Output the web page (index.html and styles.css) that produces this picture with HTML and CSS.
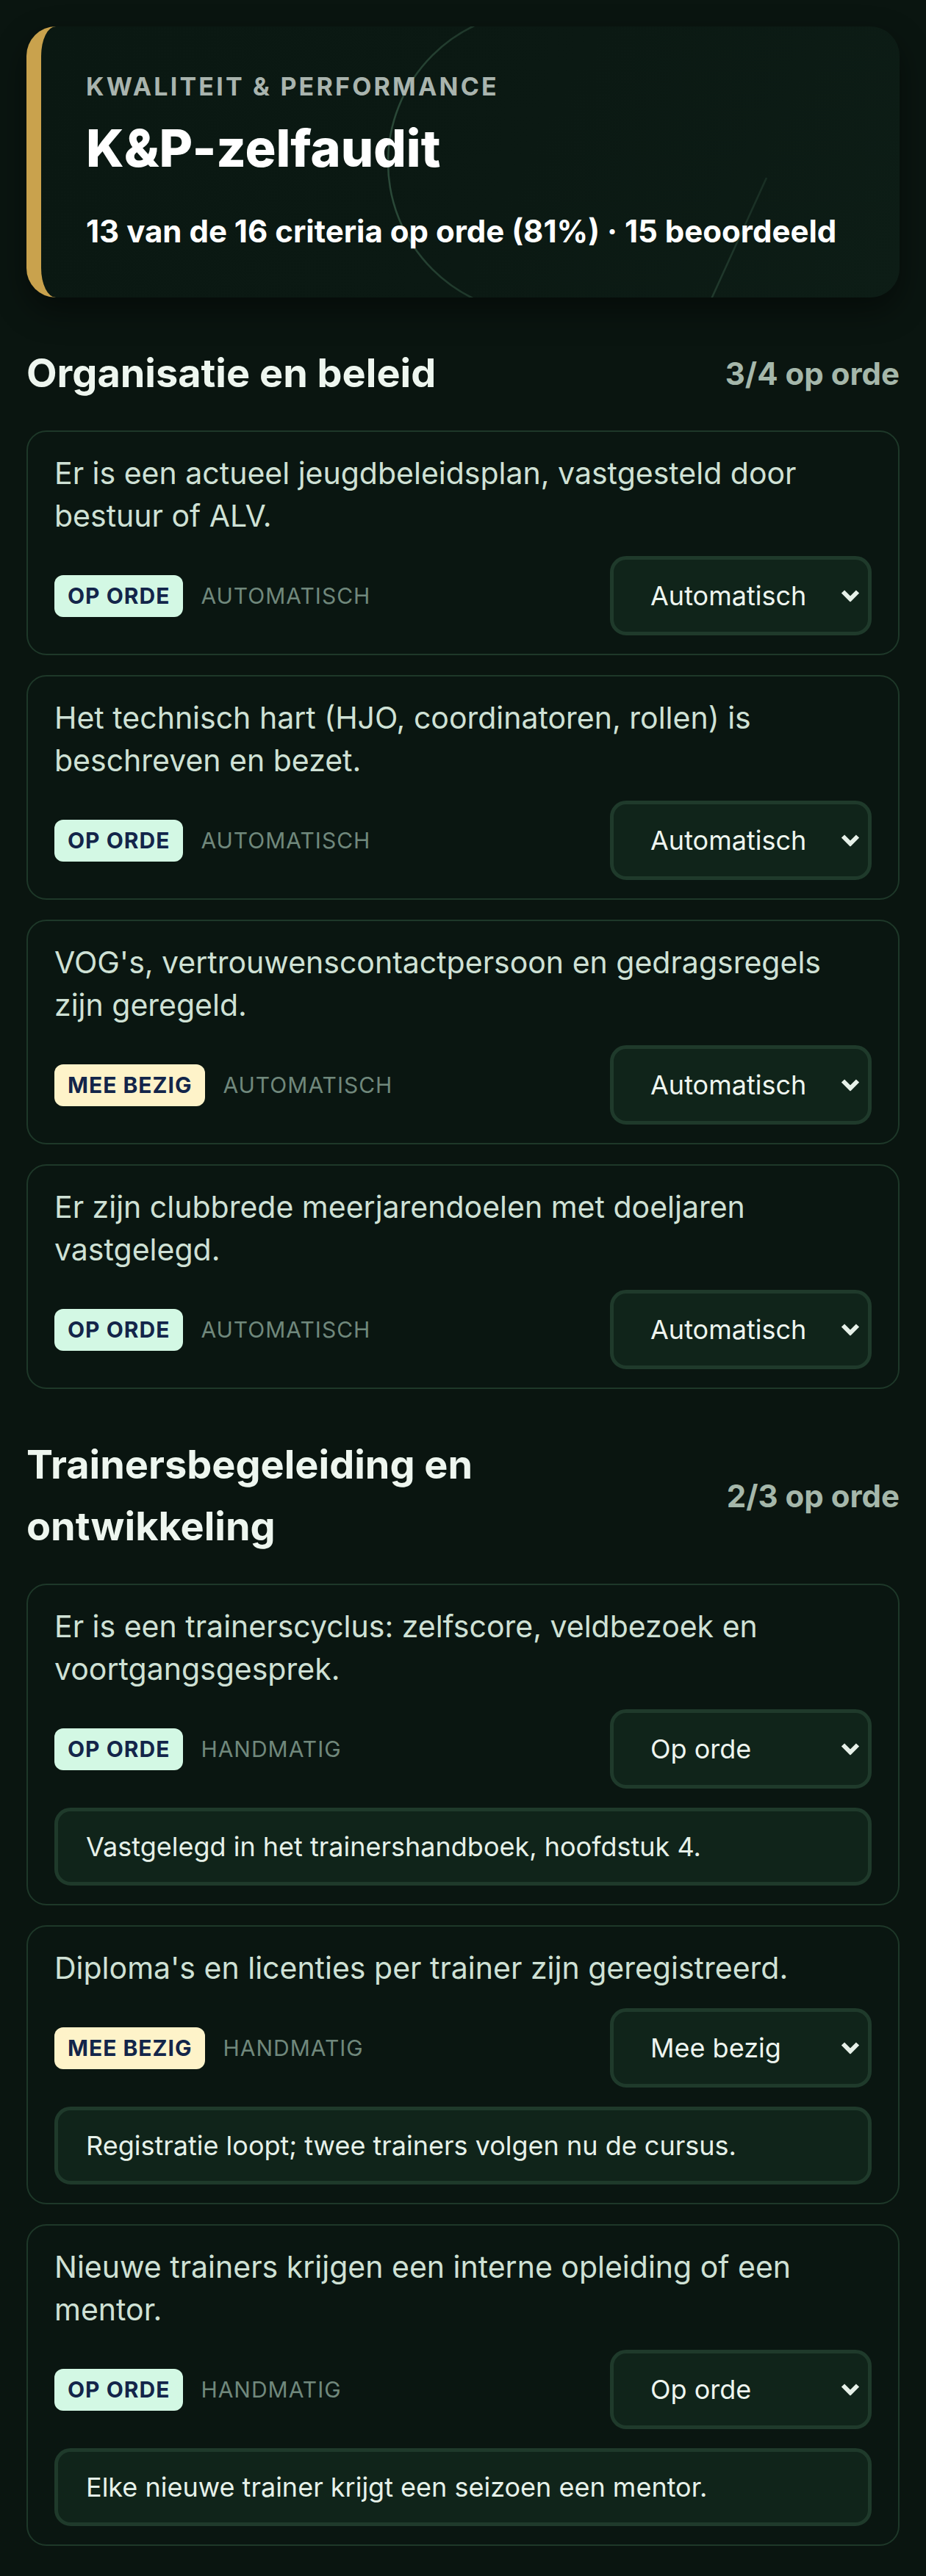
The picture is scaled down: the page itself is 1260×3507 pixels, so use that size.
FILE: index.html
```html
<!DOCTYPE html>
<html lang="nl">
  <head>
    <meta charset="UTF-8" />
    <meta name="viewport" content="width=device-width, initial-scale=1.0" />
    <title>K&amp;P-zelfaudit</title>
    <link rel="stylesheet" href="styles.css">
  </head>
  <body>
    <header class="hero">
      <svg class="hero-deco" width="1168" height="371" viewBox="0 0 1168 371" aria-hidden="true">
        <defs>
          <linearGradient id="ringFade" gradientUnits="userSpaceOnUse" x1="470" y1="0" x2="760" y2="0">
            <stop offset="0" stop-color="#2b4a39" stop-opacity="1" />
            <stop offset="1" stop-color="#2b4a39" stop-opacity="0" />
          </linearGradient>
          <linearGradient id="lineFade" gradientUnits="userSpaceOnUse" x1="0" y1="200" x2="0" y2="371">
            <stop offset="0" stop-color="#213a2d" stop-opacity="0.6" />
            <stop offset="1" stop-color="#213a2d" stop-opacity="1" />
          </linearGradient>
        </defs>
        <circle cx="678" cy="185" r="206" fill="none" stroke="url(#ringFade)" stroke-width="2.5" />
        <line x1="987" y1="206" x2="906" y2="384" stroke="url(#lineFade)" stroke-width="2.5" />
      </svg>
      <p class="hero-label">Kwaliteit &amp; Performance</p>
      <h1 class="hero-title">K&amp;P-zelfaudit</h1>
      <p class="hero-summary">13 van de 16 criteria op orde (81%) · 15 beoordeeld</p>
    </header>

    <section class="group">
      <div class="group-head">
        <h2>Organisatie en beleid</h2>
        <span class="group-count">3/4 op orde</span>
      </div>
      <div class="cards">
        <div class="card">
          <p class="criterion">Er is een actueel jeugdbeleidsplan, vastgesteld door bestuur of ALV.</p>
          <div class="card-row">
            <div class="status">
              <span class="badge ok">Op orde</span>
              <span class="source">Automatisch</span>
            </div>
            <div class="select-wrap">
              <select>
                <option selected>Automatisch</option>
                <option>Op orde</option>
                <option>Mee bezig</option>
                <option>Niet op orde</option>
              </select>
              <svg class="chevron" width="26" height="17" viewBox="0 0 26 17"><path d="M3 3 L13 13 L23 3" /></svg>
            </div>
          </div>
        </div>

        <div class="card">
          <p class="criterion">Het technisch hart (HJO, coordinatoren, rollen) is beschreven en bezet.</p>
          <div class="card-row">
            <div class="status">
              <span class="badge ok">Op orde</span>
              <span class="source">Automatisch</span>
            </div>
            <div class="select-wrap">
              <select>
                <option selected>Automatisch</option>
                <option>Op orde</option>
                <option>Mee bezig</option>
                <option>Niet op orde</option>
              </select>
              <svg class="chevron" width="26" height="17" viewBox="0 0 26 17"><path d="M3 3 L13 13 L23 3" /></svg>
            </div>
          </div>
        </div>

        <div class="card">
          <p class="criterion">VOG's, vertrouwenscontactpersoon en gedragsregels zijn geregeld.</p>
          <div class="card-row">
            <div class="status">
              <span class="badge busy">Mee bezig</span>
              <span class="source">Automatisch</span>
            </div>
            <div class="select-wrap">
              <select>
                <option selected>Automatisch</option>
                <option>Op orde</option>
                <option>Mee bezig</option>
                <option>Niet op orde</option>
              </select>
              <svg class="chevron" width="26" height="17" viewBox="0 0 26 17"><path d="M3 3 L13 13 L23 3" /></svg>
            </div>
          </div>
        </div>

        <div class="card">
          <p class="criterion">Er zijn clubbrede meerjarendoelen met doeljaren vastgelegd.</p>
          <div class="card-row">
            <div class="status">
              <span class="badge ok">Op orde</span>
              <span class="source">Automatisch</span>
            </div>
            <div class="select-wrap">
              <select>
                <option selected>Automatisch</option>
                <option>Op orde</option>
                <option>Mee bezig</option>
                <option>Niet op orde</option>
              </select>
              <svg class="chevron" width="26" height="17" viewBox="0 0 26 17"><path d="M3 3 L13 13 L23 3" /></svg>
            </div>
          </div>
        </div>
      </div>
    </section>

    <section class="group">
      <div class="group-head">
        <h2>Trainersbegeleiding en ontwikkeling</h2>
        <span class="group-count">2/3 op orde</span>
      </div>
      <div class="cards">
        <div class="card">
          <p class="criterion">Er is een trainerscyclus: zelfscore, veldbezoek en voortgangsgesprek.</p>
          <div class="card-row">
            <div class="status">
              <span class="badge ok">Op orde</span>
              <span class="source">Handmatig</span>
            </div>
            <div class="select-wrap">
              <select>
                <option>Automatisch</option>
                <option selected>Op orde</option>
                <option>Mee bezig</option>
                <option>Niet op orde</option>
              </select>
              <svg class="chevron" width="26" height="17" viewBox="0 0 26 17"><path d="M3 3 L13 13 L23 3" /></svg>
            </div>
          </div>
          <div class="note">Vastgelegd in het trainershandboek, hoofdstuk 4.</div>
        </div>

        <div class="card">
          <p class="criterion">Diploma's en licenties per trainer zijn geregistreerd.</p>
          <div class="card-row">
            <div class="status">
              <span class="badge busy">Mee bezig</span>
              <span class="source">Handmatig</span>
            </div>
            <div class="select-wrap">
              <select>
                <option>Automatisch</option>
                <option>Op orde</option>
                <option selected>Mee bezig</option>
                <option>Niet op orde</option>
              </select>
              <svg class="chevron" width="26" height="17" viewBox="0 0 26 17"><path d="M3 3 L13 13 L23 3" /></svg>
            </div>
          </div>
          <div class="note">Registratie loopt; twee trainers volgen nu de cursus.</div>
        </div>

        <div class="card">
          <p class="criterion">Nieuwe trainers krijgen een interne opleiding of een mentor.</p>
          <div class="card-row">
            <div class="status">
              <span class="badge ok">Op orde</span>
              <span class="source">Handmatig</span>
            </div>
            <div class="select-wrap">
              <select>
                <option>Automatisch</option>
                <option selected>Op orde</option>
                <option>Mee bezig</option>
                <option>Niet op orde</option>
              </select>
              <svg class="chevron" width="26" height="17" viewBox="0 0 26 17"><path d="M3 3 L13 13 L23 3" /></svg>
            </div>
          </div>
          <div class="note">Elke nieuwe trainer krijgt een seizoen een mentor.</div>
        </div>
      </div>
    </section>
  </body>
</html>
```

FILE: styles.css
```css
* {
  box-sizing: border-box;
}
body {
  margin: 0;
  padding: 36px;
  background: #0a1510;
  color: #e9f3ec;
  font-family: Inter, "Noto Sans", "Liberation Sans", sans-serif;
}
p,
h1,
h2 {
  margin: 0;
}

/* kop */
.hero {
  position: relative;
  overflow: hidden;
  padding: 60px 40px 61px 61px;
  border-left: 20px solid #c9a24d;
  border-radius: 40px;
  background: linear-gradient(120deg, #0a1812 0%, #0b1913 55%, #0d1d16 100%);
  box-shadow: 0 18px 44px rgba(0, 0, 0, 0.45);
}
.hero-deco {
  position: absolute;
  top: 0;
  left: 0;
  pointer-events: none;
}
.hero-label,
.hero-title,
.hero-summary {
  position: relative;
}
.hero-label {
  font-size: 34px;
  line-height: 44px;
  font-weight: 700;
  letter-spacing: 3.2px;
  text-transform: uppercase;
  color: #a9b4ae;
}
.hero-title {
  margin-top: 24px;
  font-size: 70px;
  line-height: 76px;
  font-weight: 800;
  color: #ffffff;
}
.hero-summary {
  margin-top: 46px;
  font-size: 42px;
  line-height: 58px;
  font-weight: 700;
  color: #ffffff;
}

/* groepen */
.group {
  margin-top: 61px;
}
.group-head {
  display: flex;
  justify-content: space-between;
  align-items: center;
  gap: 27px;
}
.group-head h2 {
  font-size: 54px;
  line-height: 84px;
  font-weight: 700;
  color: #eef6ef;
}
.group-count {
  flex-shrink: 0;
  font-size: 42px;
  font-weight: 700;
  color: #a5b7aa;
}
.cards {
  display: flex;
  flex-direction: column;
  gap: 27px;
  margin-top: 36px;
}
.card {
  padding: 27px 36px 25px;
  border: 2px solid #1e3829;
  border-radius: 27px;
  background: #0a1611;
}
.criterion {
  font-size: 41px;
  line-height: 58px;
  color: #cfe1d5;
}
.card-row {
  display: flex;
  justify-content: space-between;
  align-items: center;
  margin-top: 26px;
}
.status {
  display: flex;
  align-items: center;
  gap: 24px;
}
.badge {
  display: inline-block;
  padding: 0 18px;
  height: 57px;
  line-height: 57px;
  border-radius: 12px;
  font-size: 30px;
  font-weight: 700;
  letter-spacing: 1px;
  text-transform: uppercase;
  color: #13254a;
}
.badge.ok {
  background: #d3f8e4;
}
.badge.busy {
  background: #fef3c9;
}
.source {
  font-size: 30px;
  letter-spacing: 1px;
  text-transform: uppercase;
  color: #70887c;
}

/* keuzelijst */
.select-wrap {
  position: relative;
}
.select-wrap select {
  appearance: none;
  width: 356px;
  height: 108px;
  padding: 0 60px 0 50px;
  border: 5px solid #1f3a2b;
  border-radius: 22px;
  background: #10241a;
  color: #eef5ef;
  font-family: inherit;
  font-size: 36px;
}
.chevron {
  position: absolute;
  top: 50%;
  right: 16px;
  transform: translateY(-50%);
  pointer-events: none;
}
.chevron path {
  fill: none;
  stroke: #e6f0e8;
  stroke-width: 6;
}

.note {
  display: flex;
  align-items: center;
  height: 106px;
  margin-top: 26px;
  padding: 0 38px;
  border: 5px solid #1f3a2b;
  border-radius: 22px;
  background: #10241a;
  font-size: 36px;
  color: #e6f1e9;
}
```
